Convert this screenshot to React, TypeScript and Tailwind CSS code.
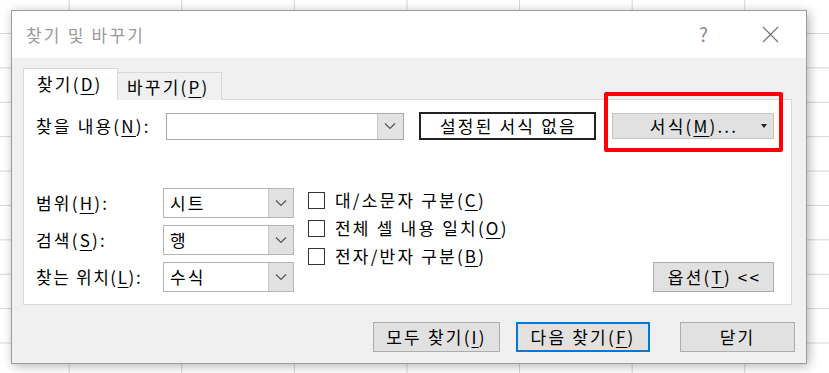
import type { ReactNode } from 'react';

const font = "font-['Noto_Sans_CJK_KR','Noto_Sans',sans-serif]";

function Mn({ children }: { children: ReactNode }) {
  return <span className="underline underline-offset-[3px] decoration-1">{children}</span>;
}

function Chevron() {
  return (
    <svg width="12" height="8" viewBox="0 0 12 8" fill="none">
      <path d="M1 1.5l5 5 5-5" stroke="#555" strokeWidth="1.2" />
    </svg>
  );
}

function SelectBox({ value }: { value: string }) {
  return (
    <div className="flex h-[30px] w-[131px] border border-[#b4b4b4] bg-white">
      <div className="flex-1 pl-[6px] leading-[28px]">{value}</div>
      <div className="flex w-[25px] items-center justify-center border-l border-[#c8c8c8] bg-[#e1e1e1]">
        <Chevron />
      </div>
    </div>
  );
}

function Check({ children }: { children: ReactNode }) {
  return (
    <div className="flex h-[28px] items-center">
      <div className="h-[17px] w-[17px] border border-[#333] bg-white" />
      <span className="ml-[10px]">{children}</span>
    </div>
  );
}

function Btn({ w, children, primary }: { w: string; children: ReactNode; primary?: boolean }) {
  return (
    <div
      className={`flex h-[30px] items-center justify-center bg-[#e1e1e1] ${w} ${
        primary ? 'border-2 border-[#0078d7]' : 'border border-[#adadad]'
      }`}
    >
      {children}
    </div>
  );
}

export default function App() {
  return (
    <div
      className={`h-[373px] w-[829px] overflow-hidden bg-white bg-[linear-gradient(to_right,#d6d6d6_1px,transparent_1px),linear-gradient(to_bottom,#d6d6d6_1px,transparent_1px)] bg-size-[112.6px_34.4px] bg-position-[68.7px_33px] pl-[11px] pt-[10px] text-[17px] tracking-[2.2px] text-black ${font}`}
    >
      <div className="flex h-[354px] w-[796px] flex-col border border-[#9c9c9c] bg-[#f0f0f0] shadow-[2px_2px_10px_rgba(0,0,0,0.3)]">
        {/* 제목 표시줄 */}
        <div className="flex h-[47px] items-center bg-white pl-[14px] pr-[27px]">
          <span className="flex-1 text-[#9a9a9a]">찾기 및 바꾸기</span>
          <span className="mr-[54px] text-[19px] tracking-normal text-[#8a8a8a]">?</span>
          <svg width="17" height="17" viewBox="0 0 17 17">
            <path d="M1 1l15 15M16 1L1 16" stroke="#707070" strokeWidth="1.1" />
          </svg>
        </div>

        <div className="flex flex-1 flex-col pt-[10px]">
          {/* 탭 */}
          <div className="relative z-10 -mb-px flex h-[32px] items-end pl-[11px]">
            <div className="h-[32px] w-[95px] border border-b-0 border-[#d9d9d9] bg-white pl-[13px] leading-[30px]">
              찾기(<Mn>D</Mn>)
            </div>
            <div className="h-[28px] w-[104px] border border-b-0 border-l-0 border-[#d9d9d9] bg-[#f0f0f0] pl-[9px] leading-[27px]">
              바꾸기(<Mn>P</Mn>)
            </div>
          </div>

          {/* 탭 내용 */}
          <div className="ml-[11px] flex h-[206px] w-[769px] flex-col border border-[#d9d9d9] bg-white pl-[12px] pr-[17px]">
            <div className="mt-[12px] flex h-[28px] items-center">
              <div className="w-[131px]">
                찾을 내용(<Mn>N</Mn>):
              </div>
              <div className="flex h-[27px] w-[241px] border border-[#a8a8a8] bg-white">
                <div className="flex-1" />
                <div className="flex w-[26px] items-center justify-center border-l border-[#c8c8c8] bg-[#e3e3e3]">
                  <Chevron />
                </div>
              </div>
              <div className="ml-[15px] flex h-[28px] w-[179px] items-center justify-center border-2 border-[#222] bg-white pl-[2px]">
                설정된 서식 없음
              </div>
              <div className="relative ml-[16px]">
                <div className="flex h-[26px] w-[162px] items-center border border-[#c4c4c4] bg-[#e1e1e1]">
                  <span className="flex-1 pl-[14px] text-center">
                    서식(<Mn>M</Mn>)...
                  </span>
                  <svg className="mr-[6px]" width="6" height="4" viewBox="0 0 6 4">
                    <path d="M0 0h6L3 4z" fill="#222" />
                  </svg>
                </div>
                <div className="absolute -left-[8px] -top-[21px] h-[60px] w-[179px] rounded-[2px] border-4 border-[#ff0000]" />
              </div>
            </div>

            <div className="mt-[48px] flex">
              <div className="grid grid-cols-[127px_131px] gap-y-[7px]">
                <div className="leading-[30px]">
                  범위(<Mn>H</Mn>):
                </div>
                <SelectBox value="시트" />
                <div className="leading-[30px]">
                  검색(<Mn>S</Mn>):
                </div>
                <SelectBox value="행" />
                <div className="leading-[30px] tracking-[1.6px]">
                  찾는 위치(<Mn>L</Mn>):
                </div>
                <SelectBox value="수식" />
              </div>

              <div className="-mt-[2px] ml-[14px] flex flex-col">
                <Check>
                  대/소문자 구분(<Mn>C</Mn>)
                </Check>
                <Check>
                  전체 셀 내용 일치(<Mn>O</Mn>)
                </Check>
                <Check>
                  전자/반자 구분(<Mn>B</Mn>)
                </Check>
              </div>

              <div className="ml-auto self-end">
                <Btn w="w-[121px]">
                  <span className="pl-[2px]">
                    옵션(<Mn>T</Mn>) &lt;&lt;
                  </span>
                </Btn>
              </div>
            </div>
          </div>

          {/* 하단 버튼 */}
          <div className="mt-[17px] flex justify-end pr-[11px]">
            <Btn w="w-[127px]">
              모두 찾기(<Mn>I</Mn>)
            </Btn>
            <div className="ml-[16px]">
              <Btn w="w-[134px]" primary>
                다음 찾기(<Mn>F</Mn>)
              </Btn>
            </div>
            <div className="ml-[30px]">
              <Btn w="w-[115px]">닫기</Btn>
            </div>
          </div>
        </div>
      </div>
    </div>
  );
}
